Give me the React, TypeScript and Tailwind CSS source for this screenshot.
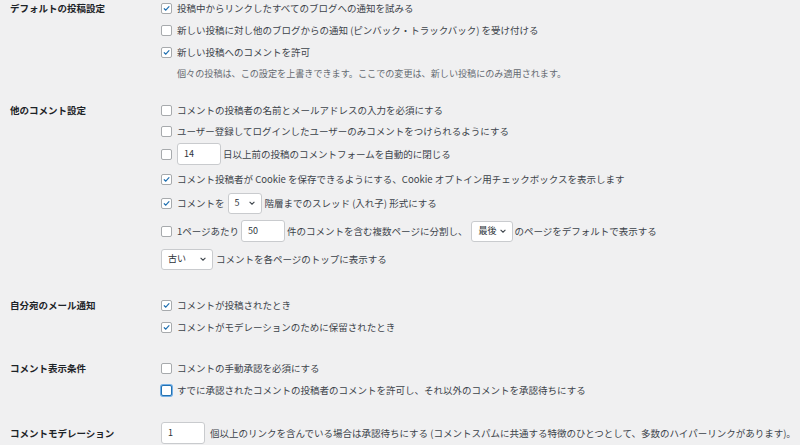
import React from 'react';

const Checkbox: React.FC<{ checked?: boolean; focused?: boolean }> = ({ checked, focused }) => (
  <span
    className={`mr-[5px] inline-flex h-[11px] w-[11px] shrink-0 items-center justify-center rounded-[2px] border bg-white ${
      focused ? 'border-[#2271b1] shadow-[0_0_0_1px_#72aee6]' : 'border-[#a7aaad]'
    }`}
  >
    {checked && (
      <svg viewBox="0 0 20 20" className="h-[11px] w-[11px]">
        <path d="M5 10.5l3.4 3.4L15.5 6" stroke="#2271b1" strokeWidth="2.6" fill="none" strokeLinecap="round" />
      </svg>
    )}
  </span>
);

const TextBox: React.FC<{ value: string; className?: string }> = ({ value, className = '' }) => (
  <span
    className={`inline-flex h-[22px] w-[44px] shrink-0 items-center rounded-[3px] border border-[#c9cbce] bg-white pl-[6px] text-[9px] text-[#2c3338] ${className}`}
  >
    {value}
  </span>
);

const Select: React.FC<{ value: string; width: string; className?: string }> = ({ value, width, className = '' }) => (
  <span
    className={`inline-flex h-[21px] shrink-0 items-center justify-between rounded-[3px] border border-[#c9cbce] bg-white pl-[6px] pr-[5px] text-[9px] text-[#2c3338] ${width} ${className}`}
  >
    <span>{value}</span>
    <svg viewBox="0 0 10 10" className="h-[8px] w-[8px]">
      <path d="M2 3.5l3 3 3-3" stroke="#3c434a" strokeWidth="1.3" fill="none" />
    </svg>
  </span>
);

const Row: React.FC<{ h?: string; children: React.ReactNode }> = ({ h = 'h-[22px]', children }) => (
  <div className={`flex items-center whitespace-nowrap ${h}`}>{children}</div>
);

const Section: React.FC<{ label: string; first?: string; className?: string; children: React.ReactNode }> = ({
  label,
  first = 'h-[22px]',
  className = '',
  children,
}) => (
  <div className={`flex ${className}`}>
    <div className={`flex w-[161px] shrink-0 items-center pl-[10px] font-bold text-[#1d2327] ${first}`}>{label}</div>
    <div className="flex flex-col">{children}</div>
  </div>
);

export default function App() {
  return (
    <div
      className="h-[445px] w-[800px] overflow-hidden bg-[#f0f0f1] text-[9.5px] text-[#3c434a]"
      style={{ fontFamily: '"Noto Sans CJK JP", "Noto Sans", sans-serif' }}
    >
      <div className="-mt-[3px]">
        <Section label="デフォルトの投稿設定">
          <Row>
            <Checkbox checked />
            投稿中からリンクしたすべてのブログへの通知を試みる
          </Row>
          <Row>
            <Checkbox />
            新しい投稿に対し他のブログからの通知 (ピンバック・トラックバック) を受け付ける
          </Row>
          <Row>
            <Checkbox checked />
            新しい投稿へのコメントを許可
          </Row>
          <Row>
            <span className="pl-[16px] text-[9.1px] text-[#646970]">
              個々の投稿は、この設定を上書きできます。ここでの変更は、新しい投稿にのみ適用されます。
            </span>
          </Row>
        </Section>

        <Section label="他のコメント設定" first="h-[20px]" className="mt-[15px]">
          <Row h="h-[20px]">
            <Checkbox />
            コメントの投稿者の名前とメールアドレスの入力を必須にする
          </Row>
          <Row>
            <Checkbox />
            ユーザー登録してログインしたユーザーのみコメントをつけられるようにする
          </Row>
          <Row h="h-[24px]">
            <Checkbox />
            <TextBox value="14" className="mr-[2px]" />
            日以上前の投稿のコメントフォームを自動的に閉じる
          </Row>
          <Row h="h-[26px]">
            <Checkbox checked />
            コメント投稿者が Cookie を保存できるようにする、Cookie オプトイン用チェックボックスを表示します
          </Row>
          <Row>
            <Checkbox checked />
            コメントを
            <Select value="5" width="w-[34px]" className="mx-[3px]" />
            階層までのスレッド (入れ子) 形式にする
          </Row>
          <Row h="h-[34px]">
            <Checkbox />
            1ページあたり
            <TextBox value="50" className="mx-[2px]" />
            件のコメントを含む複数ページに分割し、
            <Select value="最後" width="w-[42px]" className="ml-[4px] mr-[1px]" />
            のページをデフォルトで表示する
          </Row>
          <Row>
            <Select value="古い" width="w-[52px]" className="mr-[3px]" />
            コメントを各ページのトップに表示する
          </Row>
        </Section>

        <Section label="自分宛のメール通知" className="mt-[24px]">
          <Row>
            <Checkbox checked />
            コメントが投稿されたとき
          </Row>
          <Row>
            <Checkbox checked />
            コメントがモデレーションのために保留されたとき
          </Row>
        </Section>

        <Section label="コメント表示条件" className="mt-[19px]">
          <Row>
            <Checkbox />
            コメントの手動承認を必須にする
          </Row>
          <Row>
            <Checkbox focused />
            すでに承認されたコメントの投稿者のコメントを許可し、それ以外のコメントを承認待ちにする
          </Row>
        </Section>

        <Section label="コメントモデレーション" className="mt-[21px]">
          <Row>
            <TextBox value="1" className="mr-[5px]" />
            個以上のリンクを含んでいる場合は承認待ちにする (コメントスパムに共通する特徴のひとつとして、多数のハイパーリンクがあります)。
          </Row>
        </Section>
      </div>
    </div>
  );
}
